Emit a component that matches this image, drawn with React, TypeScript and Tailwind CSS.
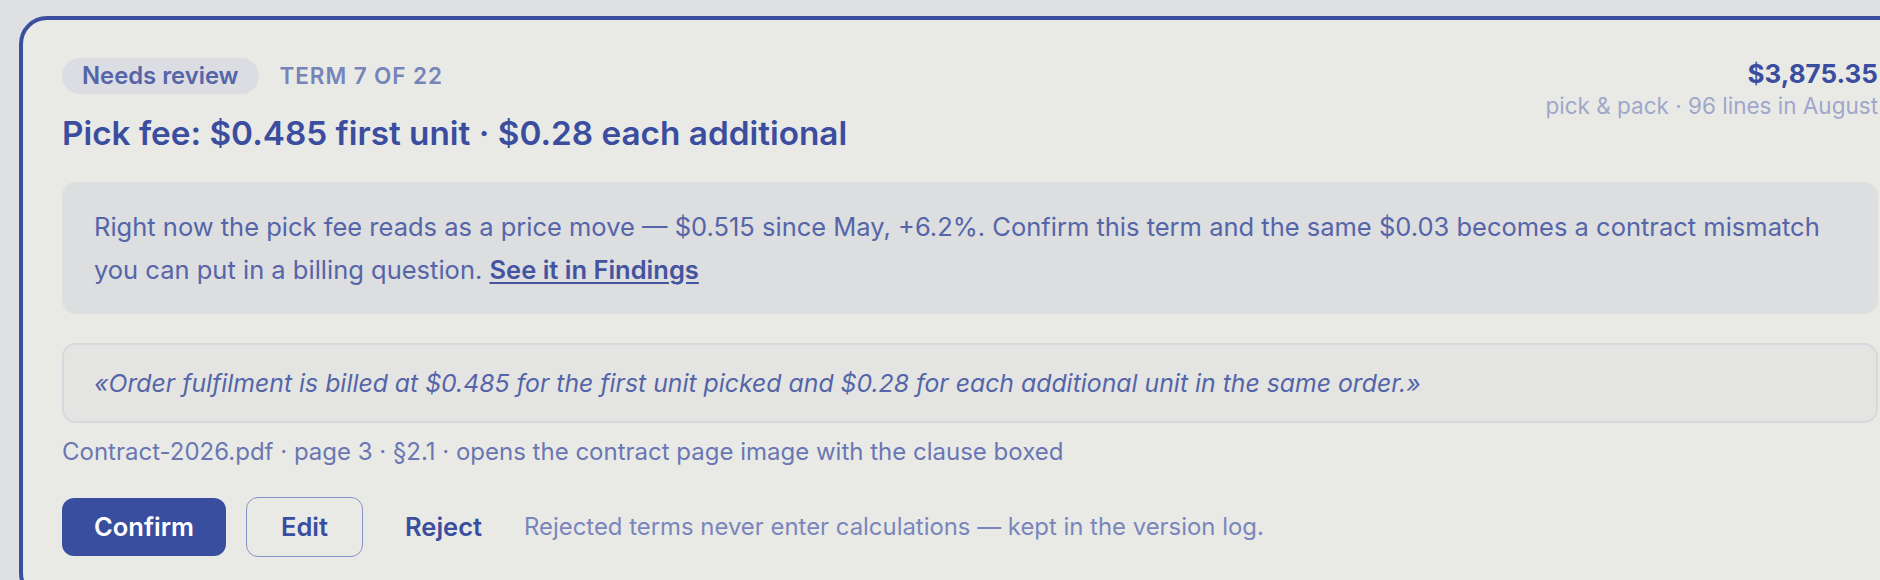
import React from "react";

export default function App() {
  return (
    <div
      className="w-[1880px] h-[580px] overflow-hidden bg-[#dfe0e2] pt-[16px] pl-[19px]"
      style={{ fontFamily: "Inter, 'Noto Sans', sans-serif" }}
    >
      <div className="w-[1902px] shrink-0 rounded-[28px] border-4 border-[#3b4f9f] bg-[#e9eae6] px-[39px] pt-[38px] pb-[40px]">
        <div className="flex items-start justify-between">
          <div className="flex flex-col">
            <div className="flex items-center gap-[21px]">
              <span className="flex h-[36px] items-center rounded-full bg-[#dcdde2] px-[20px] text-[23.8px] font-semibold text-[#5565a8]">
                Needs review
              </span>
              <span className="text-[22.5px] font-semibold uppercase tracking-[0.04em] text-[#7684b9]">
                Term 7 of 22
              </span>
            </div>
            <h1 className="mt-[19px] text-[33.3px] font-semibold leading-[40px] text-[#3a4d9e]">
              Pick fee: $0.485 first unit · $0.28 each additional
            </h1>
          </div>
          <div className="flex flex-col items-end">
            <div className="text-[26px] font-bold leading-[32px] text-[#3a4d9e]">$3,875.35</div>
            <div className="mt-[2px] text-[22.5px] leading-[28px] text-[#a0a7c9]">
              pick &amp; pack · 96 lines in August
            </div>
          </div>
        </div>

        <p className="mt-[29px] rounded-[14px] bg-[#dcdee0] px-[32px] py-[23px] text-[25.5px] leading-[43px] text-[#5565a8]">
          <span>
            Right now the pick fee reads as a price move — $0.515 since May, +6.2%. Confirm this term and the same $0.03 becomes a contract mismatch you can put in a billing question.
          </span>{" "}
          <a className="font-semibold text-[#44549f] underline underline-offset-[3px]">See it in Findings</a>
        </p>

        <div className="mt-[29px] rounded-[14px] border-2 border-[#d6d8dd] bg-[#e4e5e3] px-[30px] py-[22px] text-[24.8px] italic leading-[32px] text-[#5565a8]">
          «Order fulfilment is billed at $0.485 for the first unit picked and $0.28 for each additional unit in the same order.»
        </div>

        <div className="mt-[14px] text-[24px] leading-[30px] text-[#6a77b3]">
          Contract-2026.pdf · page 3 · §2.1 · opens the contract page image with the clause boxed
        </div>

        <div className="mt-[30px] flex items-center gap-[20px]">
          <button className="flex h-[58px] items-center rounded-[12px] bg-[#3a4ea0] px-[32px] text-[25.5px] font-semibold text-white">
            Confirm
          </button>
          <button className="flex h-[60px] items-center rounded-[12px] border-[1.5px] border-[#8692c6] px-[34px] text-[25.5px] font-semibold text-[#3a4d9e]">
            Edit
          </button>
          <button className="flex h-[58px] items-center px-[22px] text-[25.5px] font-semibold text-[#3a4d9e]">
            Reject
          </button>
          <span className="text-[23.9px] text-[#7a86bb]">
            Rejected terms never enter calculations — kept in the version log.
          </span>
        </div>
      </div>
    </div>
  );
}
